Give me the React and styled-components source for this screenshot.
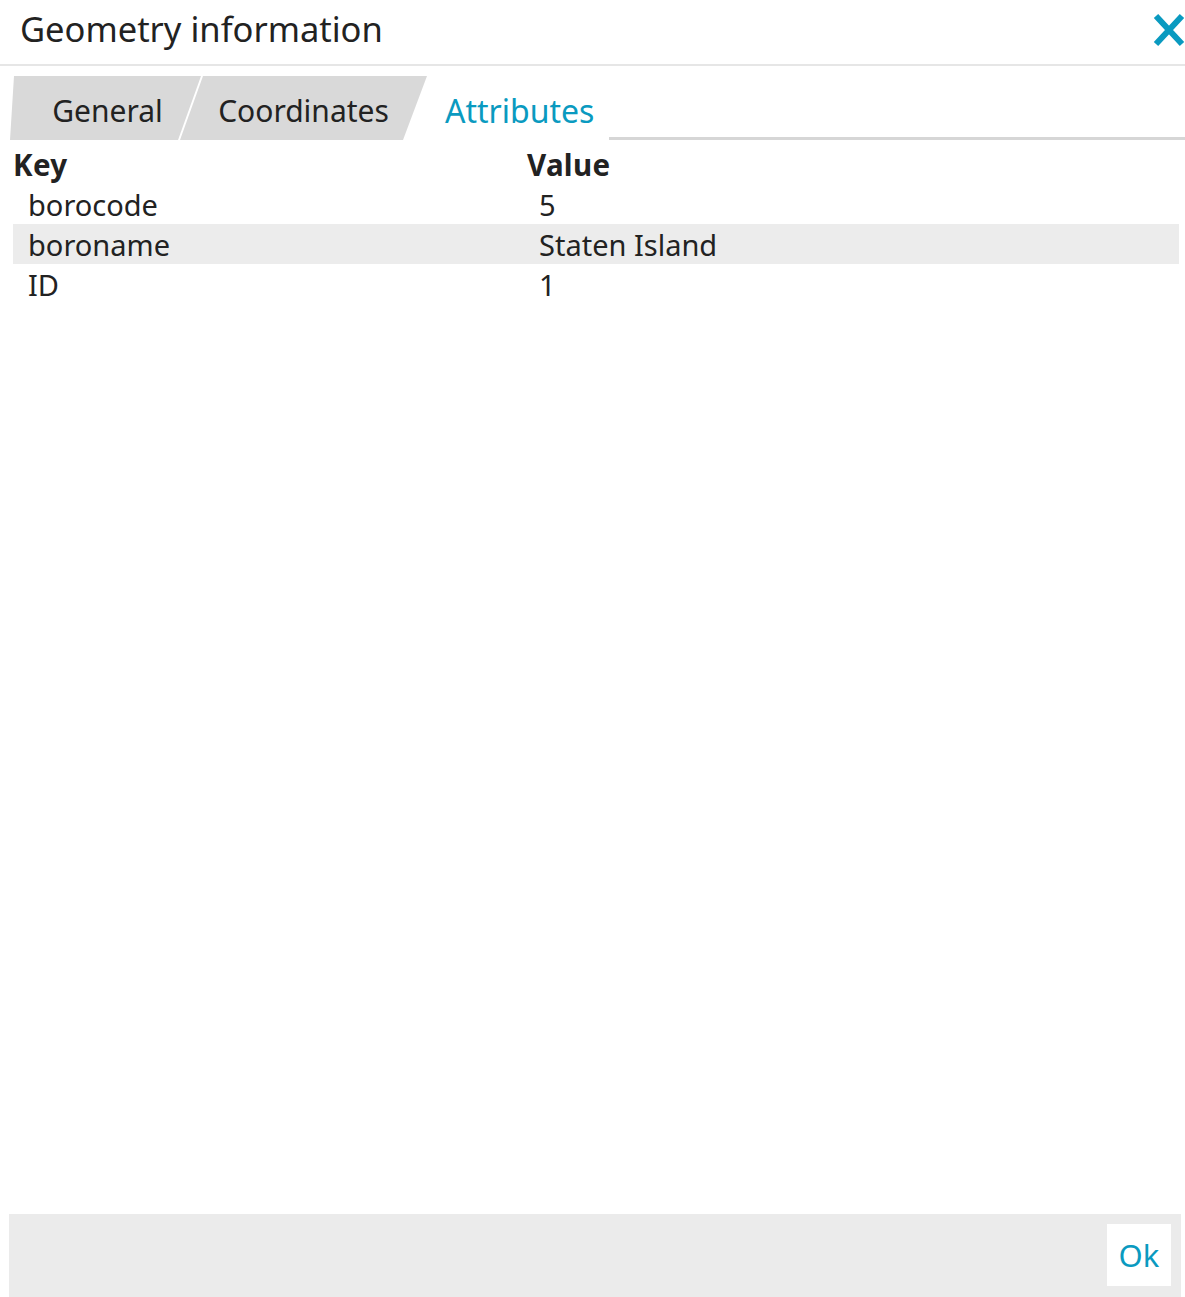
import React from "react";
import styled, { createGlobalStyle } from "styled-components";

const Global = createGlobalStyle`
  html, body { margin: 0; padding: 0; background: #fff; }
  body { font-family: "Noto Sans", "Open Sans", sans-serif; color: #222; }
`;

const Dialog = styled.div`
  width: 1185px;
  height: 1297px;
  display: flex;
  flex-direction: column;
  background: #fff;
`;

const Header = styled.div`
  height: 64px;
  display: flex;
  align-items: center;
  justify-content: space-between;
  padding: 0 0 0 20px;
  border-bottom: 2px solid #e6e6e6;
  box-sizing: content-box;
`;

const Title = styled.h1`
  margin: 0;
  font-size: 34.5px;
  font-weight: 400;
  color: #222;
  line-height: 1;
  padding-bottom: 6px;
`;

const CloseButton = styled.button`
  border: none;
  background: none;
  padding: 0;
  width: 32px;
  height: 34px;
  margin-bottom: 4px;
  display: flex;
  cursor: pointer;
`;

const Body = styled.div`
  flex: 1;
  display: flex;
  flex-direction: column;
  padding: 10px 0 0 10px;
`;

const TabBar = styled.div`
  display: flex;
  height: 64px;
`;

const Tab = styled.div`
  height: 64px;
  display: flex;
  align-items: center;
  justify-content: ${(p) => (p.$active ? "flex-start" : "center")};
  font-size: ${(p) => (p.$active ? 32 : 30)}px;
  color: ${(p) => (p.$active ? "#0a9ac0" : "#222")};
  background: ${(p) => (p.$active ? "#fff" : "#d9d9d9")};
  width: ${(p) => p.$w}px;
  margin-left: ${(p) => p.$ml || 0}px;
  padding-left: ${(p) => p.$pl || 0}px;
  box-sizing: border-box;
  clip-path: ${(p) => p.$clip};
  padding-top: 4px;
`;

const TabFill = styled.div`
  flex: 1;
  border-bottom: 3px solid #d6d6d6;
  box-sizing: border-box;
`;

const Table = styled.div`
  margin-top: 4px;
  margin-right: 6px;
  display: flex;
  flex-direction: column;
`;

const Row = styled.div`
  display: grid;
  grid-template-columns: 514px 1fr;
  height: 40px;
  align-items: center;
  font-size: 29px;
  background: ${(p) => (p.$shade ? "#ececec" : "transparent")};
  margin-left: 3px;
`;

const HeadCell = styled.div`
  font-weight: 700;
  font-size: 29.5px;
  letter-spacing: 0.3px;
  margin-left: 0;
`;

const Cell = styled.div`
  padding-left: ${(p) => p.$pl}px;
  color: #222;
`;

const Footer = styled.div`
  height: 83px;
  margin: 0 4px 0 9px;
  background: #ebebeb;
  display: flex;
  justify-content: flex-end;
  align-items: flex-start;
  padding: 10px 10px 0 0;
  box-sizing: border-box;
`;

const OkButton = styled.button`
  width: 64px;
  height: 62px;
  border: none;
  background: #fff;
  color: #0a9ac0;
  font-family: inherit;
  font-size: 31px;
  padding: 0;
  cursor: pointer;
`;

const rows = [
  ["borocode", "5"],
  ["boroname", "Staten Island"],
  ["ID", "1"],
];

export default function App() {
  return (
    <Dialog>
      <Global />
      <Header>
        <Title>Geometry information</Title>
        <CloseButton aria-label="Close">
          <svg width="32" height="34" viewBox="0 0 32 34">
            <path d="M3 3 L29 31 M29 3 L3 31" stroke="#0a9ac0" strokeWidth="6" fill="none" strokeLinecap="butt" />
          </svg>
        </CloseButton>
      </Header>
      <Body>
        <TabBar>
          <Tab $w={191} $pl={4} $clip="polygon(4px 0, 100% 0, calc(100% - 23px) 100%, 0 100%)">General</Tab>
          <Tab $w={247} $ml={-21} $clip="polygon(23px 0, 100% 0, calc(100% - 24px) 100%, 0 100%)">
            Coordinates
          </Tab>
          <Tab $active $w={204} $ml={-22} $pl={40} $clip="none">Attributes</Tab>
          <TabFill />
        </TabBar>
        <Table>
          <Row>
            <HeadCell>Key</HeadCell>
            <HeadCell>Value</HeadCell>
          </Row>
          {rows.map(([k, v], i) => (
            <Row key={k} $shade={i === 1}>
              <Cell $pl={15}>{k}</Cell>
              <Cell $pl={12}>{v}</Cell>
            </Row>
          ))}
        </Table>
      </Body>
      <Footer>
        <OkButton>Ok</OkButton>
      </Footer>
    </Dialog>
  );
}
